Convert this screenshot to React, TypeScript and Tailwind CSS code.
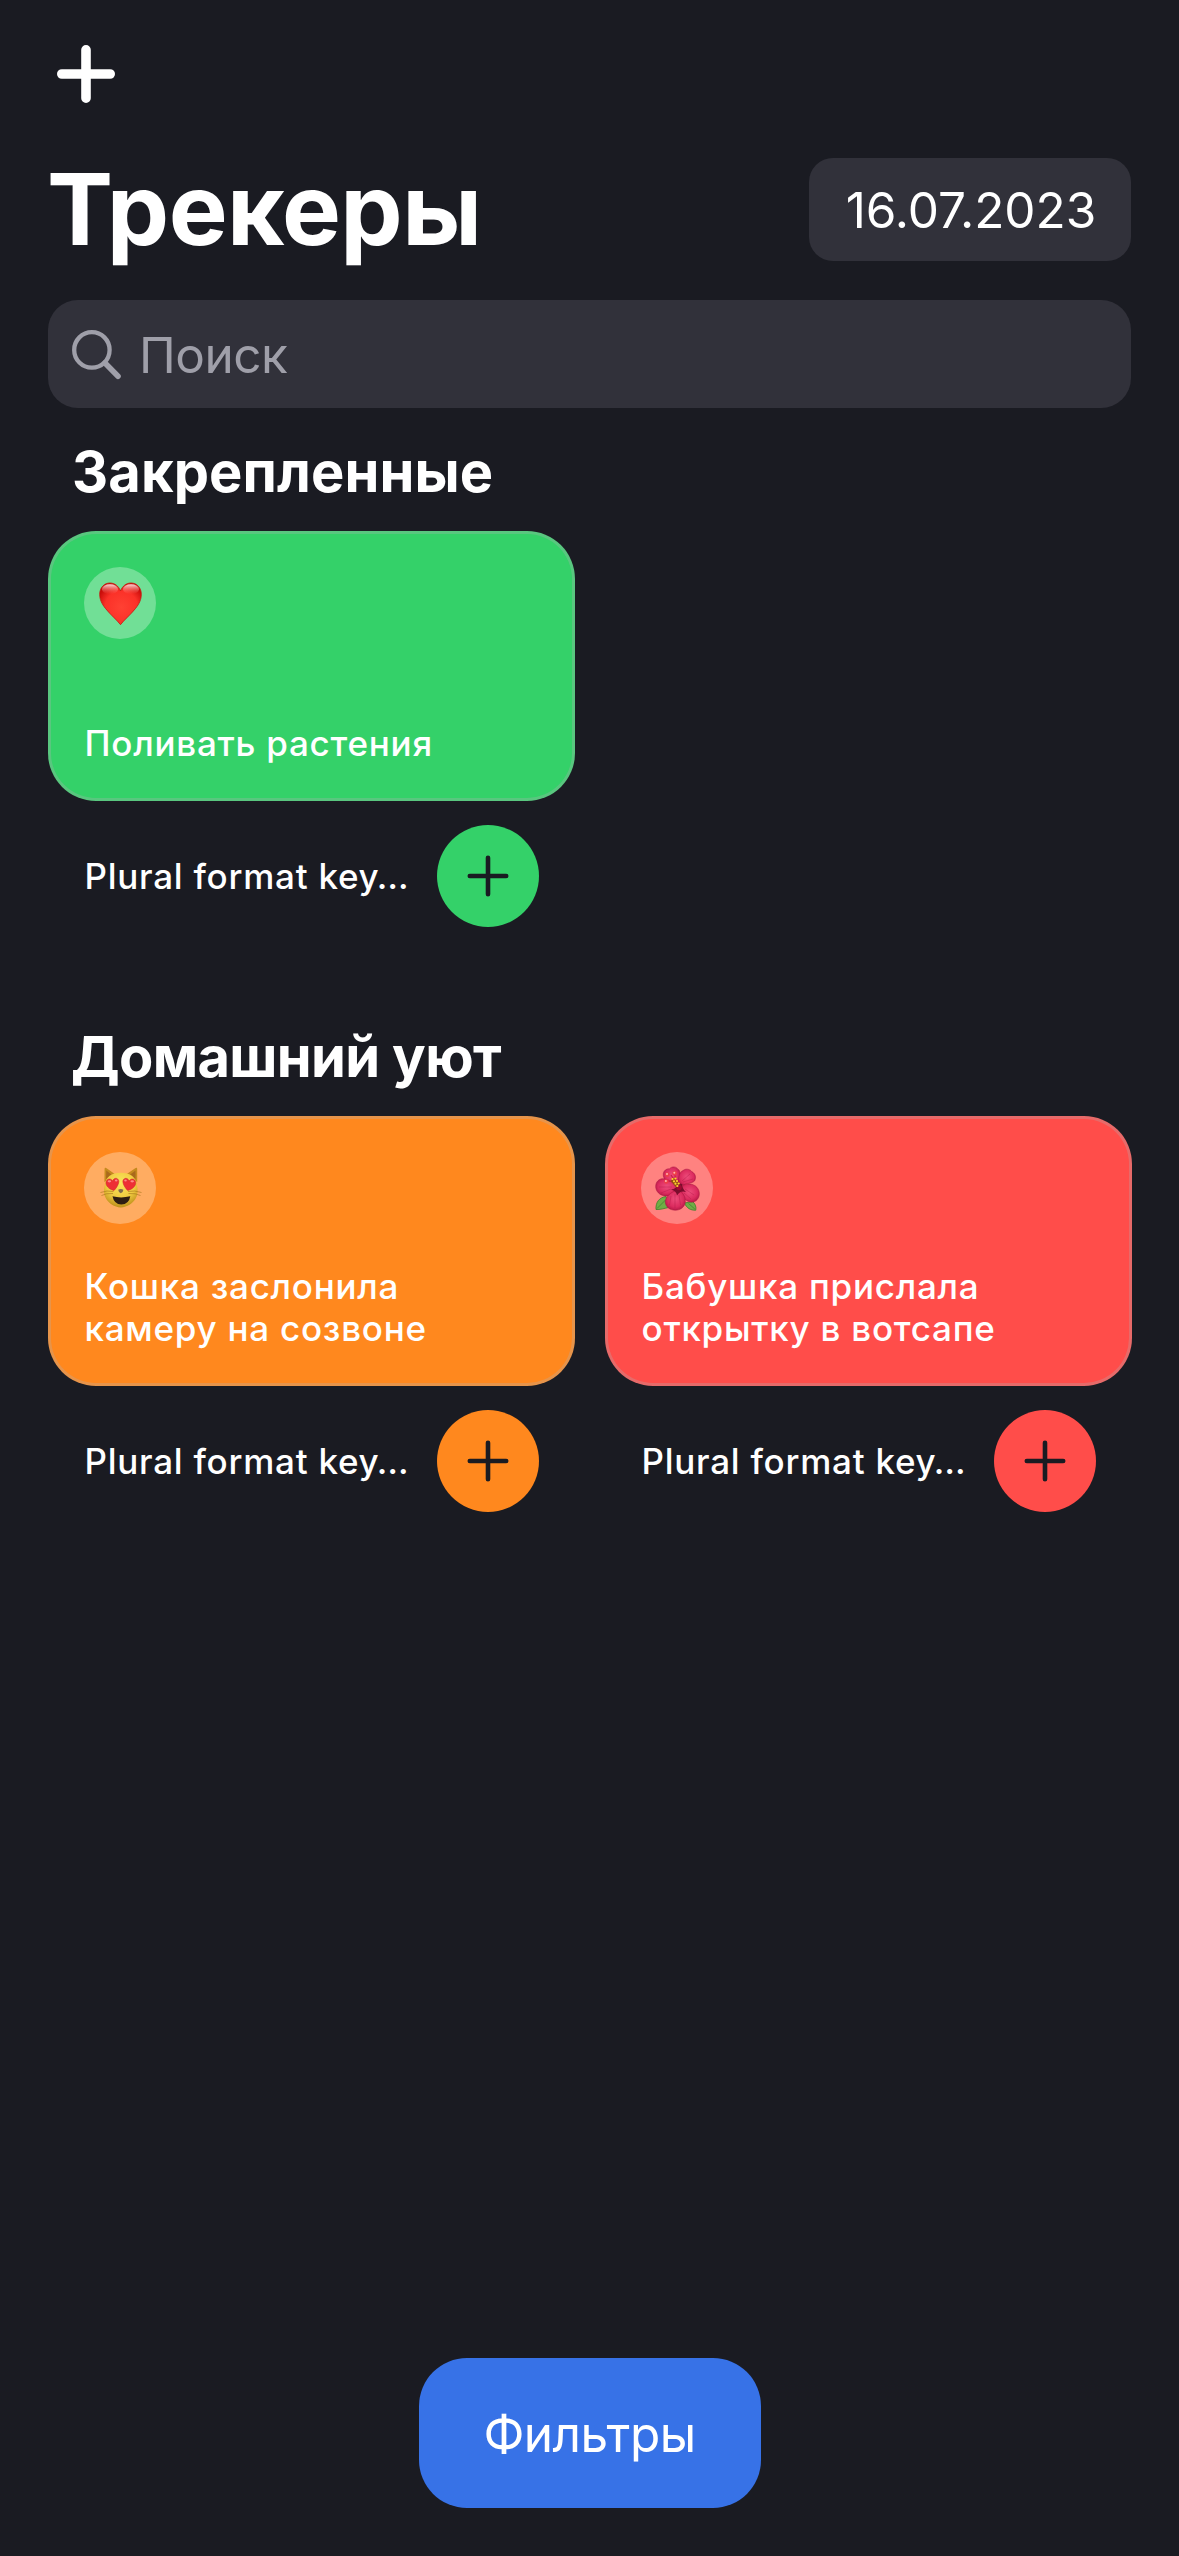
import React from 'react';

function HeartEmoji() {
  return (
    <svg viewBox="0 0 72 72" className="size-full">
      <defs>
        <radialGradient id="heartFill" cx="0.52" cy="0.58" r="0.6">
          <stop offset="0" stopColor="#ff4133" />
          <stop offset="0.65" stopColor="#fb3128" />
          <stop offset="1" stopColor="#c90d0a" />
        </radialGradient>
        <linearGradient id="heartShine" x1="0" y1="0" x2="0" y2="1">
          <stop offset="0" stopColor="#fff" stopOpacity="0.85" />
          <stop offset="1" stopColor="#ff6a60" stopOpacity="0" />
        </linearGradient>
      </defs>
      <path
        d="M36.500 57.700C33 53 27 48.300 21.500 41.500C17.500 36.500 15.700 32.200 15.700 27.300C15.700 20.700 20.200 16 26 16C30.700 16 34.600 19 36.500 24C38.400 19 42.300 16 47 16C52.800 16 57.300 20.700 57.300 27.300C57.300 32.200 55.500 36.500 51.500 41.500C46 48.300 40 53 36.500 57.700Z"
        fill="url(#heartFill)"
        stroke="#c5150d"
        strokeWidth="0.8"
      />
      <ellipse cx="26" cy="22.300" rx="8" ry="5" fill="url(#heartShine)" />
      <ellipse cx="47" cy="22.300" rx="8" ry="5" fill="url(#heartShine)" />
    </svg>
  );
}

function CatEmoji() {
  return (
    <svg viewBox="0 0 72 72" className="size-full">
      <defs>
        <radialGradient id="catFace" cx="0.5" cy="0.3" r="0.72">
          <stop offset="0" stopColor="#fbe65c" />
          <stop offset="0.6" stopColor="#efc93f" />
          <stop offset="1" stopColor="#b98a17" />
        </radialGradient>
      </defs>
      <path d="M20.400 30L20.600 17C20.600 15.500 21.600 15.400 22.600 16.200L31.500 22.500Z" fill="#c58a1e" />
      <path d="M53.200 30L53.200 17C53.200 15.500 52.200 15.400 51.200 16.200L42 22.500Z" fill="#c58a1e" />
      <path d="M22 27L22.300 18.600L28.500 23.500Z" fill="#a9691c" />
      <path d="M51.600 27L51.500 18.600L45 23.500Z" fill="#a9691c" />
      <path
        d="M36.800 20.700C46.500 20.700 51.500 25 52.800 32.500C54.200 38 54 43 51.500 46.800C48.500 51.800 43.500 54.800 36.800 55.600C30.100 54.800 25.100 51.800 22.100 46.800C19.600 43 19.400 38 20.800 32.500C22.100 25 27.100 20.700 36.800 20.700Z"
        fill="url(#catFace)"
      />
      <path
        d="M29.500 39.500Q23 38 16.500 40.500M29 41.500Q22 41 17.500 43.500M44 39.500Q50.500 38 57.500 40.500M44.500 41.500Q51.500 41 56.500 43.500"
        fill="none"
        stroke="#a8771c"
        strokeWidth="0.8"
        opacity="0.8"
      />
      <g fill="#ee2f35" stroke="#c9242a" strokeWidth="0.5">
        <path d="M30 38.500C26 37.500 22.300 34.800 22 31.300C21.800 28.700 23.500 26.900 25.700 27C27 27.100 28 27.900 28.600 29.100C29.200 27 31 26 32.600 26.400C34.600 26.900 35.200 28.900 34.600 31C33.900 33.800 32 36.500 30 38.500Z" />
        <path d="M43.700 38.500C47.700 37.500 51.400 34.800 51.700 31.300C51.900 28.700 50.200 26.900 48 27C46.700 27.100 45.700 27.900 45.100 29.100C44.500 27 42.700 26 41.100 26.400C39.100 26.900 38.500 28.900 39.100 31C39.800 33.800 41.700 36.500 43.700 38.500Z" />
      </g>
      <g fill="#ff9a96" opacity="0.85">
        <ellipse cx="25.400" cy="29.300" rx="1.800" ry="1.100" />
        <ellipse cx="32.200" cy="28.500" rx="1.300" ry="1" />
        <ellipse cx="41.500" cy="28.500" rx="1.300" ry="1" />
        <ellipse cx="48.200" cy="29.300" rx="1.800" ry="1.100" />
      </g>
      <path d="M34.200 37.800Q36.800 36.400 39.400 37.800Q39 40.900 36.800 41.300Q34.600 40.900 34.200 37.800Z" fill="#806a4c" />
      <path d="M28.500 44.300Q36.800 46.500 46.300 44.300Q45 52.300 37.300 52.600Q30 52.300 28.500 44.300Z" fill="#2e1d12" />
    </svg>
  );
}

function HibiscusEmoji() {
  return (
    <svg viewBox="0 0 72 72" className="size-full">
      <defs>
        <radialGradient id="petal" cx="0.5" cy="0.45" r="0.6">
          <stop offset="0" stopColor="#ee4d7c" />
          <stop offset="0.65" stopColor="#dc2c5f" />
          <stop offset="1" stopColor="#b01543" />
        </radialGradient>
      </defs>
      <path d="M25 44.500C18 45.500 14.500 50.500 15 57.500C19 57.800 23 56.500 27.500 55.500Z" fill="#6fae45" stroke="#3e7d2c" strokeWidth="0.8" />
      <path d="M43.500 51C45.500 56 49.500 58.500 54.800 58.200C55.500 54.500 54 51.500 51.500 49.500Z" fill="#6fae45" stroke="#3e7d2c" strokeWidth="0.8" />
      <path d="M16 56.500L24.500 48M53.800 57L47.500 51.500" stroke="#3e7d2c" strokeWidth="0.7" />
      <g fill="url(#petal)" stroke="#a81440" strokeWidth="0.500">
        <path d="M36 34C28 32 21.500 28 22.300 21.500C22.800 18 26 16.500 28.500 16.800C31 13.900 35.500 14.500 37 17.300C40 18.500 39.500 24 37 34Z" />
        <path d="M37.500 34.500C37 27 37.500 20.500 42 18.500C45 16.200 49 17 51 19.800C54.500 21.500 55.500 26 53.500 29C51 31.500 45 31.500 37.500 34.500Z" />
        <path d="M37 36C33 42 28.500 45.500 22 43.500C17 42.300 14 37.500 14.800 33C15.500 28.500 19.500 25.800 24 27C29 28 34 31.500 37 36Z" />
        <path d="M38.500 35C43 31.500 50 30.800 54.500 34C58.500 37 59.500 43 57 46.500C54.500 50.500 50 51 46.500 49C42 46.800 39 41.500 38.500 35Z" />
        <path d="M37.500 37.500C42 40.500 44.800 45 44.300 50C43.800 55 39.500 58.200 34.500 58.200C29 58.300 24.800 55 24.300 50.500C24 45 29.500 40 37.500 37.500Z" />
      </g>
      <g stroke="#b21a49" strokeWidth="0.600" fill="none" opacity="0.7">
        <path d="M34 42V56M30 44L28.500 53M38 43L39.500 53M44 37L53 43M43 41L50 47M31 35L18 35M30 37L20 41M41 29L49 22M42 30L52 27" />
      </g>
      <path d="M30 37.500Q36 37 36.500 31L41 32Q41 36.500 45 40Q39.500 38 36 43.500Q35.500 39 30 37.500Z" fill="#7b0d2d" />
      <circle cx="38" cy="35.500" r="2.700" fill="#a10a32" />
      <path d="M37.500 34.500L30 23M34 29L26 29.300M35 29L33.700 22" stroke="#c71d47" strokeWidth="1.200" />
      <path d="M31.300 27.300L36.800 33.500" stroke="#9a4a16" strokeWidth="5" />
      <g fill="#ffd22e">
        <circle cx="31.500" cy="27" r="1.100" />
        <circle cx="34.500" cy="26.500" r="1.100" />
        <circle cx="33" cy="29.300" r="1.100" />
        <circle cx="36" cy="29" r="1.100" />
        <circle cx="34.500" cy="31.700" r="1.100" />
        <circle cx="37.700" cy="31.500" r="1.100" />
        <circle cx="36.300" cy="34" r="1.100" />
      </g>
      <g fill="#ee3f48">
        <circle cx="26.400" cy="22.600" r="2.300" />
        <circle cx="33.700" cy="21.300" r="2.300" />
        <circle cx="25.300" cy="29.500" r="2.300" />
      </g>
      <g fill="#ffb5b0">
        <circle cx="26" cy="22" r="1" />
        <circle cx="33.300" cy="20.700" r="1" />
        <circle cx="24.900" cy="28.900" r="1" />
      </g>
    </svg>
  );
}

type Tracker = { title: string[]; color: string; emoji: React.ReactNode };

function TrackerCard({ title, color, emoji }: Tracker) {
  return (
    <article className="w-[527px]">
      <div
        className={`${color} flex h-[270px] flex-col justify-between rounded-[48px] border-[3px] border-[#aeafb4]/30 px-[33px] pt-[33px] pb-[34px]`}
      >
        <div className="size-[72px] rounded-full bg-white/30">{emoji}</div>
        <p className="ml-[0.5px] text-[35px] leading-[42px] font-medium tracking-[0.75px]">
          {title.map((line) => (
            <span key={line} className="block whitespace-nowrap">
              {line}
            </span>
          ))}
        </p>
      </div>
      <div className="mt-6 flex h-[102px] items-center justify-between pr-9 pl-[36.5px]">
        <span className="text-[35px] leading-[42px] font-medium tracking-[0.75px] whitespace-nowrap">Plural format key…</span>
        <button className={`${color} flex size-[102px] items-center justify-center rounded-full`}>
          <svg viewBox="0 0 42 42" className="size-[42px]">
            <path d="M21 2.800V39.200M2.800 21H39.200" stroke="#1a1b22" strokeWidth="4.600" strokeLinecap="round" />
          </svg>
        </button>
      </div>
    </article>
  );
}

export default function App() {
  return (
    <div className="flex h-[2556px] w-[1179px] flex-col bg-[#1a1b22] px-12 font-['Inter',sans-serif] text-white">
      <header>
        <button className="mt-[45px] ml-[9px] block size-[58px]">
          <svg viewBox="0 0 58 58" className="size-full">
            <path d="M29 4.800V53.200M4.800 29H53.200" stroke="#fff" strokeWidth="9.600" strokeLinecap="round" />
          </svg>
        </button>
        <div className="mt-[46px] flex items-start justify-between">
          <h1 className="-ml-px text-[99px] leading-[120px] font-bold tracking-[-0.6px]">Трекеры</h1>
          <div className="mt-[9px] flex h-[103px] w-[322px] items-center justify-center rounded-[24px] bg-[#31313a] pt-px pl-0.5 text-[49.5px] leading-[60px]">
            16.07.2023
          </div>
        </div>
      </header>

      <div className="mt-[31px] flex h-[108px] items-center rounded-[30px] bg-[#31313a] pl-6 text-[#9f9fa9]">
        <svg viewBox="0 0 50 50" className="mt-0.5 size-[50px]" fill="none" stroke="currentColor" strokeLinecap="round">
          <circle cx="19.900" cy="19.900" r="17.700" strokeWidth="4.300" />
          <path d="M33 33L46 46.200" strokeWidth="5.600" />
        </svg>
        <span className="mt-0.5 ml-[17px] text-[49.5px] leading-[60px] tracking-[-0.5px]">Поиск</span>
      </div>

      <section className="mt-[30px] h-[585px]">
        <h2 className="ml-6 text-[56px] leading-[68px] font-bold tracking-[0.12px]">Закрепленные</h2>
        <div className="mt-[25px] flex gap-[30px]">
          <TrackerCard title={['Поливать растения']} color="bg-[#34d169]" emoji={<HeartEmoji />} />
        </div>
      </section>

      <section>
        <h2 className="ml-[23px] text-[56px] leading-[68px] font-bold tracking-[-0.65px]">Домашний уют</h2>
        <div className="mt-[25px] flex w-[1084px] gap-[30px]">
          <TrackerCard title={['Кошка заслонила', 'камеру на созвоне']} color="bg-[#ff881e]" emoji={<CatEmoji />} />
          <TrackerCard title={['Бабушка прислала', 'открытку в вотсапе']} color="bg-[#ff4d4a]" emoji={<HibiscusEmoji />} />
        </div>
      </section>

      <button className="mt-auto mb-12 flex h-[150px] w-[342px] items-center justify-center self-center rounded-[48px] bg-[#3772e7] pt-0.5 text-[49.5px] leading-[60px] tracking-[-0.55px]">
        Фильтры
      </button>
    </div>
  );
}
